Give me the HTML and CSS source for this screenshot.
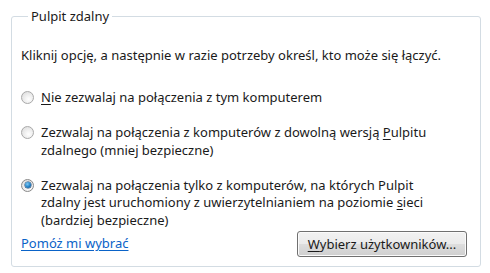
FILE: index.html
```html
<!DOCTYPE html>
<html lang="pl">
<head>
<meta charset="utf-8">
<title>Pulpit zdalny</title>
<link rel="stylesheet" href="styles.css">
</head>
<body>
<div class="page">
  <fieldset class="group">
    <legend class="group-title">Pulpit zdalny</legend>
    <p class="intro">Kliknij opcję, a następnie w razie potrzeby określ, kto może się łączyć.</p>
    <div class="options">
      <label class="option">
        <span class="radio"></span>
        <span class="option-text"><u>N</u>ie zezwalaj na połączenia z tym komputerem</span>
      </label>
      <label class="option">
        <span class="radio"></span>
        <span class="option-text">Zezwalaj na połączenia z komputerów z dowolną wersją <u>P</u>ulpitu<br>zdalnego (mniej bezpieczne)</span>
      </label>
      <label class="option">
        <span class="radio checked"></span>
        <span class="option-text">Zezwalaj na połączenia tylko z komputerów, na których Pulpit<br>zdalny jest uruchomiony z uwierzytelnianiem na poziomie <u>s</u>ieci<br>(bardziej bezpieczne)</span>
      </label>
    </div>
    <div class="footer">
      <a class="help-link" href="#">Pomóż mi wybrać</a>
      <button class="btn" type="button"><u>W</u>ybierz użytkowników...</button>
    </div>
  </fieldset>
</div>
</body>
</html>
```
FILE: styles.css
```css
html, body {
  margin: 0;
  padding: 0;
  background: #ffffff;
}

body {
  font-family: "Noto Sans", "Liberation Sans", Arial, sans-serif;
  font-size: 13px;
  line-height: 17.5px;
  color: #1a1a1a;
}

.page {
  width: 490px;
  height: 273px;
  padding: 8px 9px 0 11px;
  box-sizing: border-box;
}

.group {
  margin: 0;
  padding: 21.5px 13px 9px 9px;
  border: 1px solid #d3dce3;
  border-radius: 3px;
  height: 259px;
  box-sizing: border-box;
  display: flex;
  flex-direction: column;
}

.group-title {
  padding: 0 3px;
  margin-left: 7px;
  color: #1a1a1a;
}

.intro {
  margin: 0 0 24.5px 0;
}

.options {
  display: flex;
  flex-direction: column;
  gap: 17.5px;
}

.option {
  display: flex;
  align-items: flex-start;
  gap: 7px;
}

.option u, .btn u {
  text-decoration: underline;
  text-underline-offset: 2px;
}

.radio {
  flex: none;
  width: 13px;
  height: 13px;
  margin-top: 2px;
  box-sizing: border-box;
  border-radius: 50%;
  border: 1px solid #a9a9a9;
  background: radial-gradient(circle at 60% 65%, #ffffff 0%, #eeeeee 45%, #d8d8d8 100%);
  position: relative;
}

.radio.checked {
  border-color: #8a8a8a;
}

.radio.checked::after {
  content: "";
  position: absolute;
  left: 2.5px;
  top: 2.5px;
  width: 6px;
  height: 6px;
  border-radius: 50%;
  background: radial-gradient(circle at 40% 35%, #7fc9f5 0%, #1f7fc4 55%, #0f3f7a 100%);
  box-shadow: 0 0 0 0.5px #1b3f6b;
}

.footer {
  margin-top: auto;
  display: flex;
  justify-content: space-between;
  align-items: center;
}

.help-link {
  color: #0a63c8;
  text-decoration: underline;
  text-underline-offset: 2px;
}

.btn {
  width: 170px;
  height: 26px;
  padding: 0;
  font-family: inherit;
  font-size: 13px;
  color: #1a1a1a;
  border: 1px solid #707070;
  border-radius: 3px;
  background: linear-gradient(#f2f2f2 0%, #ebebeb 48%, #dddddd 52%, #cfcfcf 100%);
  box-shadow: inset 0 0 0 1px #fbfbfb;
}
```
